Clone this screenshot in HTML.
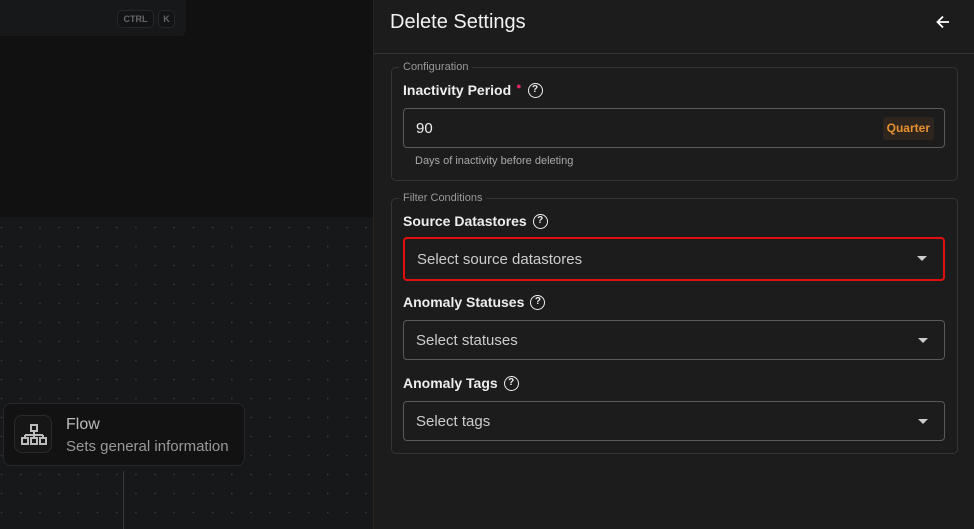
<!DOCTYPE html>
<html><head><style>
*{box-sizing:border-box;margin:0;padding:0}
body{width:974px;height:529px;overflow:hidden;background:#111;font-family:"Liberation Sans",sans-serif;position:relative}
.canvas{position:absolute;left:0;top:217px;width:373px;height:312px;background-color:#17181a;background-image:radial-gradient(#3a3b3e 0.7px,transparent 1px);background-size:19.2px 19px;background-position:-8px 1px}
.search{position:absolute;left:0;top:0;width:186px;height:36px;background:#17181a;border-radius:0 0 6px 0}
.kbd{position:absolute;top:10px;height:18px;border:1px solid #26272a;border-radius:5px;background:#131416;color:#666;font-size:9px;font-weight:bold;line-height:16px;text-align:center}
.node{position:absolute;left:3px;top:403px;width:242px;height:63px;background:#121212;border:1px solid #26272a;border-radius:8px}
.node .ic{position:absolute;left:10px;top:11px;width:38px;height:38px;border:1px solid #2a2a2c;border-radius:8px;background:#161616}
.node .t{position:absolute;left:62px;top:12px;color:#bbb;font-size:16px}
.node .s{position:absolute;left:62px;top:34px;color:#999;font-size:15px}
.vline{position:absolute;left:123px;top:471px;width:1px;height:58px;background:#3a3a3a}
.panel{position:absolute;left:373px;top:0;width:601px;height:529px;background:#1c1c1c;border-left:1px solid #2a2420}
.hdr{position:absolute;left:0;top:0;width:601px;height:54px;border-bottom:1px solid #353535}
.hdr h1{position:absolute;left:16px;top:11px;font-size:20px;font-weight:normal;color:#f2f2f2}
fieldset{position:absolute;left:17px;width:567px;border:1px solid #343434;border-radius:5px}
legend{font-size:11px;color:#999;margin-left:7px;padding:0 4px}
.lbl{position:absolute;left:29px;font-size:14px;font-weight:bold;color:#eee;display:flex;align-items:center;height:18px}
.q{display:inline-block;width:15px;height:15px;border:1.6px solid #eee;border-radius:50%;font-size:10px;line-height:12px;text-align:center;margin-left:6px}
.inp{position:absolute;left:29px;width:542px;height:40px;border:1px solid #5a5a5a;border-radius:4px;color:#ccc;font-size:15px;padding-left:12px;line-height:39px}
.inp .arr{position:absolute;right:16px;top:17px;width:0;height:0;border-left:5px solid transparent;border-right:5px solid transparent;border-top:5px solid #ccc}
</style></head><body>
<div class="search"><div class="kbd" style="left:117px;width:37px">CTRL</div><div class="kbd" style="left:158px;width:17px">K</div></div>
<div class="canvas"></div>
<div class="node"><div class="ic"><svg width="38" height="38" viewBox="0 0 38 38" fill="none" stroke="#bbb" stroke-width="2"><rect x="16" y="9" width="6" height="6"/><path d="M19 15v4M10 19h18M10 19v3M19 19v3M28 19v3"/><rect x="7" y="22" width="6" height="6"/><rect x="16" y="22" width="6" height="6"/><rect x="25" y="22" width="6" height="6"/></svg></div><div class="t">Flow</div><div class="s">Sets general information</div></div>
<div class="vline"></div>
<div class="panel">
<div class="hdr"><h1>Delete Settings</h1><svg style="position:absolute;left:562px;top:14px" width="14" height="16" viewBox="0 0 14 16" fill="none" stroke="#fff" stroke-width="1.8"><path d="M13 8H2M7 2.5L1.5 8L7 13.5"/></svg></div>
<fieldset style="top:61px;height:120px"><legend>Configuration</legend></fieldset>
<div class="lbl" style="top:81px">Inactivity Period <span style="color:#e0245e;font-size:9px;margin:-8px 0 0 5px">●</span><span class="q">?</span></div>
<div class="inp" style="top:108px;color:#eee;line-height:40px">90<span style="position:absolute;right:10px;top:8px;height:23px;line-height:23px;padding:0 4px;background:#2e261e;border-radius:3px;color:#e8902e;font-size:12px;font-weight:bold">Quarter</span></div>
<div style="position:absolute;left:41px;top:155px;font-size:11px;color:#aaa">Days of inactivity before deleting</div>
<fieldset style="top:192px;height:262px"><legend>Filter Conditions</legend></fieldset>
<div class="lbl" style="top:212px">Source Datastores<span class="q">?</span></div>
<div class="inp" style="top:237px;height:44px;border:2px solid #e01010;line-height:41px">Select source datastores<span class="arr"></span></div>
<div class="lbl" style="top:293px">Anomaly Statuses<span class="q">?</span></div>
<div class="inp" style="top:320px;line-height:40px">Select statuses<span class="arr"></span></div>
<div class="lbl" style="top:374px">Anomaly Tags<span class="q">?</span></div>
<div class="inp" style="top:401px;line-height:40px">Select tags<span class="arr"></span></div>
</div>
</body></html>
